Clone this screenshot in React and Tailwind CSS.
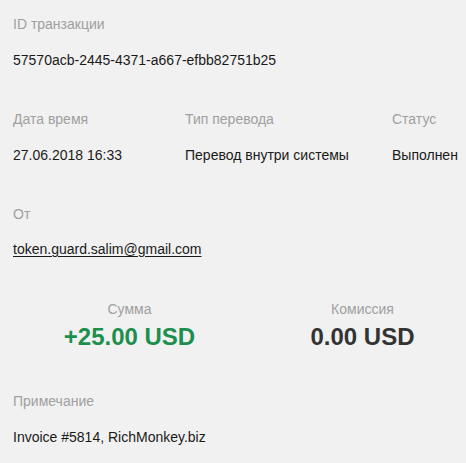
import React from 'react';

const Label = ({ children, className = '' }) => (
  <div className={`text-[14px] leading-5 text-[#a0a0a0] ${className}`}>{children}</div>
);

const Value = ({ children, className = '' }) => (
  <div className={`mt-4 text-[14px] leading-5 text-[#1a1a1a] ${className}`}>{children}</div>
);

export default function App() {
  return (
    <div
      className="w-[466px] h-[463px] overflow-hidden bg-[#f1f1f1] px-[13px] pt-[14px]"
      style={{ fontFamily: '"Liberation Sans", Arial, sans-serif' }}
    >
      <section>
        <Label>ID транзакции</Label>
        <Value>57570acb-2445-4371-a667-efbb82751b25</Value>
      </section>

      <section className="mt-[39px] grid grid-cols-[172px_207px_1fr]">
        <div>
          <Label>Дата время</Label>
          <Value>27.06.2018 16:33</Value>
        </div>
        <div>
          <Label>Тип перевода</Label>
          <Value>Перевод внутри системы</Value>
        </div>
        <div>
          <Label>Статус</Label>
          <Value className="whitespace-nowrap">Выполнен</Value>
        </div>
      </section>

      <section className="mt-[39px]">
        <Label>От</Label>
        <div className="mt-[15px] text-[14px] leading-5 text-[#1a1a1a]">
          <a href="#" className="underline underline-offset-2">token.guard.salim@gmail.com</a>
        </div>
      </section>

      <section className="mt-10 flex">
        <div className="w-[233px] shrink-0 text-center">
          <Label>Сумма</Label>
          <div className="mt-[4px] text-[24px] leading-7 font-bold text-[#1c8f4d]">+25.00 USD</div>
        </div>
        <div className="w-[233px] shrink-0 text-center">
          <Label>Комиссия</Label>
          <div className="mt-[4px] text-[24px] leading-7 font-bold text-[#333333]">0.00 USD</div>
        </div>
      </section>

      <section className="mt-10">
        <Label>Примечание</Label>
        <Value>Invoice #5814, RichMonkey.biz</Value>
      </section>
    </div>
  );
}
